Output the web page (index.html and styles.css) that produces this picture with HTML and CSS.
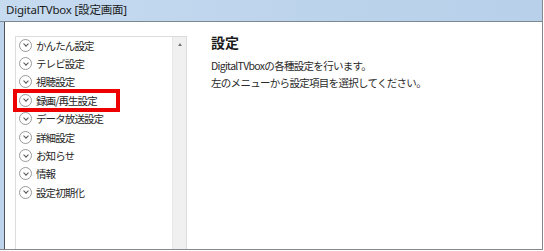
FILE: index.html
```html
<!doctype html>
<html lang="ja">
<head>
  <meta charset="utf-8"/>
  <title>DigitalTVbox [設定画面]</title>
  <link rel="stylesheet" href="styles.css">
</head>
<body>
  <div class="window">
    <div class="titlebar">DigitalTVbox [設定画面]</div>

    <div class="client">
      <!-- left menu -->
      <div class="menu">
        <ul class="menu-list">
          <li><span class="chev"></span>かんたん設定</li>
          <li><span class="chev"></span>テレビ設定</li>
          <li><span class="chev"></span>視聴設定</li>
          <li class="marked"><span class="chev"></span>録画/再生設定</li>
          <li><span class="chev"></span>データ放送設定</li>
          <li><span class="chev"></span>詳細設定</li>
          <li><span class="chev"></span>お知らせ</li>
          <li><span class="chev"></span>情報</li>
          <li><span class="chev"></span>設定初期化</li>
        </ul>
        <div class="scroll"><span class="arrow"></span></div>
      </div>

      <!-- right pane -->
      <div class="content">
        <h1>設定</h1>
        <p>DigitalTVboxの各種設定を行います。<br>左のメニューから設定項目を選択してください。</p>
      </div>
    </div>
  </div>
</body>
</html>
```

FILE: styles.css
```css
*,*::before,*::after{box-sizing:border-box;margin:0;padding:0}
body{background:#fff;font-family:"Noto Sans CJK JP","Noto Sans",sans-serif;color:#222}

.window{
  width:543px;
  height:250px;
  display:flex;
  flex-direction:column;
  background:#bdd4ec;
  border-right:1px solid #85898e;
  border-bottom:1px solid #85898e;
}

/* ---------- TITLE ---------- */
.titlebar{
  height:22px;
  padding:2px 0 0 6px;
  background:linear-gradient(90deg,#c6dbf0 0%,#bcd3ec 60%,#b9d0ea 100%);
  border-bottom:1px solid #7d8790;
  font-family:"Noto Sans","Noto Sans CJK JP",sans-serif;
  font-size:11.5px;
  line-height:16px;
  letter-spacing:-0.2px;
  color:#1b1b1b;
}

/* ---------- CLIENT ---------- */
.client{
  flex:1;
  position:relative;
  display:flex;
  margin-left:4px;
  border-left:1px solid #4f5358;
  background:#fff;
  padding:14px 0 0 10px;
  overflow:hidden;
}

.menu{
  width:172px;
  display:flex;
  border:1px solid #dcdcdc;
  border-bottom:none;
}
.menu-list{flex:1;list-style:none;margin-top:-1px}
.menu-list li{
  position:relative;
  display:flex;
  align-items:center;
  height:18.4px;
  padding-left:3px;
  font-size:10.5px;
  letter-spacing:-0.9px;
  color:#262626;
}
.chev{
  width:13px;
  height:13px;
  margin-right:4px;
  border:1px solid #9a9a9a;
  border-radius:50%;
  position:relative;
  flex-shrink:0;
}
.chev::after{
  content:"";
  position:absolute;
  left:3.5px;
  top:2.5px;
  width:4px;
  height:4px;
  border-right:1.5px solid #555;
  border-bottom:1.5px solid #555;
  transform:rotate(45deg);
}

/* annotation */
.marked::before{
  content:"";
  position:absolute;
  left:-3px;
  top:-2px;
  width:107px;
  height:23px;
  border:4px solid #ee0000;
}

.scroll{
  width:14px;
  background:#f0f0f0;
  border-left:1px solid #e6e6e6;
  display:flex;
  justify-content:center;
  padding-top:6px;
}
.arrow{
  width:0;
  height:0;
  border-left:2.5px solid transparent;
  border-right:2.5px solid transparent;
  border-bottom:3px solid #777;
}

/* ---------- CONTENT ---------- */
.content{padding:0 0 0 24px}
.content h1{
  font-size:14px;
  font-weight:bold;
  line-height:18px;
  margin-top:-3px;
  color:#1a1a1a;
}
.content p{
  margin-top:6px;
  font-size:10.5px;
  line-height:17px;
  letter-spacing:-0.7px;
  color:#2a2a2a;
}
```
